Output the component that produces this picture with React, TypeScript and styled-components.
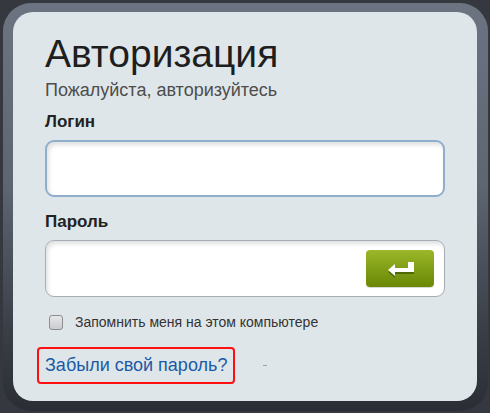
import React from 'react';
import styled, {createGlobalStyle} from "styled-components";

const GlobalStyle = createGlobalStyle`
    html, body {
        margin: 0;
        padding: 0;
        background: #35383e;
        font-family: "Liberation Sans", Arial, sans-serif;
    }
`

const EnterIcon = () => (
    <svg width="30" height="18" viewBox="0 0 30 18">
        <polygon points="23,3 29,3 29,13 10,13 10,17 3,11 10,5 10,9 23,9" fill="#4f6a05" transform="translate(0,1)"/>
        <polygon points="23,2 29,2 29,12 10,12 10,16 3,10 10,4 10,8 23,8" fill="#ffffff"/>
    </svg>
);

export default function App() {
    return (
        <StyledPage>
            <GlobalStyle/>
            <Frame>
                <Panel>
                    <Title>Авторизация</Title>
                    <Subtitle>Пожалуйста, авторизуйтесь</Subtitle>
                    <Field $top={12}>
                        <Label>Логин</Label>
                        <InputBox $focused>
                            <TextInput type="text"/>
                        </InputBox>
                    </Field>
                    <Field $top={15}>
                        <Label>Пароль</Label>
                        <InputBox>
                            <TextInput type="password"/>
                            <SubmitButton type="button" aria-label="Войти">
                                <EnterIcon/>
                            </SubmitButton>
                        </InputBox>
                    </Field>
                    <Remember>
                        <Checkbox/>
                        <span>Запомнить меня на этом компьютере</span>
                    </Remember>
                    <Footer>
                        <ForgotLink href="#">Забыли свой пароль?</ForgotLink>
                        <Dash/>
                    </Footer>
                </Panel>
            </Frame>
        </StyledPage>
    );
}

const StyledPage = styled.div`
    width: 490px;
    height: 413px;
    padding: 3px 0 0 3px;
    box-sizing: border-box;
    background: #35383e;
`

const Frame = styled.div`
    width: 485px;
    height: 408px;
    box-sizing: border-box;
    padding: 9px 11px 10px 10px;
    border-radius: 28px;
    background: linear-gradient(to bottom, #6c7482 0%, #5d6571 45%, #3a3f47 80%, #2a2e34 100%);
`

const Panel = styled.div`
    height: 100%;
    box-sizing: border-box;
    padding: 23px 31px 0 32px;
    border-radius: 20px;
    background: #dfe6e9;
    display: flex;
    flex-direction: column;
`

const Title = styled.h1`
    margin: 0;
    font-size: 39px;
    line-height: 38px;
    font-weight: 400;
    color: #1e1e1e;
`

const Subtitle = styled.p`
    margin: 8px 0 0;
    font-size: 18px;
    line-height: 19px;
    color: #4d4d4d;
`

const Field = styled.div<{ $top: number }>`
    display: flex;
    flex-direction: column;
    margin-top: ${p => p.$top}px;
`

const Label = styled.label`
    font-size: 17px;
    line-height: 20px;
    font-weight: 700;
    color: #222;
    margin-bottom: 8px;
`

const InputBox = styled.div<{ $focused?: boolean }>`
    width: 400px;
    height: 57px;
    box-sizing: border-box;
    display: flex;
    align-items: center;
    padding: 0 10px 0 12px;
    background: #fff;
    border-radius: 9px;
    border: ${p => p.$focused ? '2px solid #8eaecb' : '1px solid #a7adb5'};
    box-shadow: inset 2px 3px 4px rgba(0, 0, 0, 0.12);
`

const TextInput = styled.input`
    flex: 1;
    min-width: 0;
    border: none;
    outline: none;
    background: transparent;
    font-size: 18px;
    font-family: inherit;
`

const SubmitButton = styled.button`
    width: 68px;
    height: 37px;
    border: none;
    padding: 0;
    border-radius: 4px;
    display: flex;
    align-items: center;
    justify-content: center;
    background: linear-gradient(to bottom, #9bb82a 0%, #7e9c14 55%, #6a8806 100%);
    box-shadow: 0 1px 0 rgba(0, 0, 0, 0.15);
    cursor: pointer;
`

const Remember = styled.label`
    display: flex;
    align-items: center;
    gap: 12px;
    margin-top: 17px;
    padding-left: 4px;
    font-size: 14px;
    line-height: 16px;
    color: #333;
`

const Checkbox = styled.span`
    width: 14px;
    height: 15px;
    box-sizing: border-box;
    border: 1px solid #8a8d92;
    border-radius: 3px;
    background: linear-gradient(to bottom, #e8e8e8, #c9cbce);
`

const Footer = styled.div`
    display: flex;
    align-items: center;
    margin: 17px 0 0 -8px;
`

const ForgotLink = styled.a`
    display: inline-block;
    padding: 6px 6px 7px 6px;
    border: 2px solid #ff1010;
    border-radius: 4px;
    font-size: 18px;
    line-height: 20px;
    color: #1b5aa6;
    text-decoration: none;
`

const Dash = styled.span`
    width: 4px;
    height: 1px;
    margin-left: 28px;
    background: #9aa0a6;
`
